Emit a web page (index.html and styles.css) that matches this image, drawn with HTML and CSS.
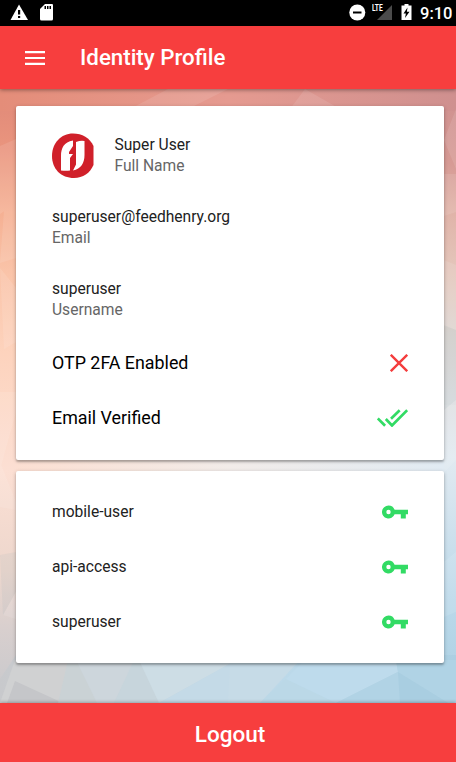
FILE: index.html
```html
<!DOCTYPE html>
<html lang="en">
<head>
<meta charset="utf-8">
<title>Identity Profile</title>
<link rel="stylesheet" href="styles.css">
</head>
<body>
<div class="status-bar">
  <svg class="status-left" width="60" height="26" viewBox="0 0 60 26">
    <path fill="#fff" d="M19 4.500 28 20H10.500z"/>
    <path fill="#000" d="M18 10h2.200v4.500H18zM18 16h2.200v2H18z"/>
    <path fill="#fff" d="M45 4h7q1 0 1 1v14q0 1.500-1.500 1.500h-10Q40 20.500 40 19V9z"/>
    <path fill="#000" d="M44.500 6H46v3h-1.500zM47 6h1.500v3H47zM49.500 6H51v3h-1.500z"/>
  </svg>
  <div class="status-right">
    <svg width="66" height="26" viewBox="348 0 66 26">
      <circle cx="357.300" cy="12.500" r="8" fill="#fff"/>
      <path fill="#000" d="M353 11.500h8.500v2H353z"/>
      <path fill="#4b4b4b" d="M392 5v15h-15z"/>
      <path fill="#fff" d="M404.500 4h4v1.500h3V20h-10V5.500h3z"/>
      <path fill="#000" d="M407.500 7.500 403.500 13.500h2.400L405 18l4.500-6.200h-2.600z"/>
    </svg>
    <span class="lte">LTE</span>
    <span class="clock">9:10</span>
  </div>
</div>
<header class="toolbar">
  <svg class="menu" width="20" height="14" viewBox="0 0 20 14"><path fill="#fff" d="M0 0h20v2.200H0zM0 5.900h20v2.200H0zM0 11.800h20V14H0z"/></svg>
  <h1>Identity Profile</h1>
</header>
<main class="content">
  <svg class="backdrop" viewBox="0 89 456 614" preserveAspectRatio="none">
    <defs>
      <linearGradient id="l" x1="0" y1="0" x2="0" y2="1">
        <stop offset="0" stop-color="#df8878"/><stop offset=".1" stop-color="#ea957e"/><stop offset=".2" stop-color="#f5b093"/><stop offset=".3" stop-color="#fac4a9"/><stop offset=".43" stop-color="#fdd3bd"/><stop offset=".62" stop-color="#fcdfd3"/><stop offset=".78" stop-color="#edd7cd"/><stop offset=".88" stop-color="#d8cfce"/><stop offset="1" stop-color="#c6c8cc"/>
      </linearGradient>
      <linearGradient id="r" x1="0" y1="0" x2="0" y2="1">
        <stop offset="0" stop-color="#cf908f"/><stop offset=".12" stop-color="#d69a94"/><stop offset=".2" stop-color="#e0b3a8"/><stop offset=".3" stop-color="#e4c7bc"/><stop offset=".4" stop-color="#ddd6d2"/><stop offset=".6" stop-color="#e1eaf1"/><stop offset=".72" stop-color="#cee1ed"/><stop offset=".85" stop-color="#b9d8e9"/><stop offset="1" stop-color="#abcfe2"/>
      </linearGradient>
      <linearGradient id="t"><stop offset="0" stop-color="#e48d79"/><stop offset=".5" stop-color="#e59a90"/><stop offset="1" stop-color="#cf908f"/></linearGradient>
      <linearGradient id="m"><stop offset="0" stop-color="#fcdfd2"/><stop offset=".5" stop-color="#f2ece9"/><stop offset="1" stop-color="#e1ebf3"/></linearGradient>
      <linearGradient id="b"><stop offset="0" stop-color="#c8c9cc"/><stop offset=".3" stop-color="#c7d5dc"/><stop offset=".65" stop-color="#bbd9ea"/><stop offset="1" stop-color="#abcfe2"/></linearGradient>
    </defs>
    <path fill="url(#l)" d="M0 89h228v614H0z"/>
    <path fill="url(#r)" d="M228 89h228v614H228z"/>
    <path fill="url(#t)" d="M0 89h456v22H0z"/>
    <path fill="url(#m)" d="M16 450h428v30H16z"/>
    <path fill="url(#b)" d="M16 655h440v48H0v-24z"/>
    <path fill="#d0d1d2" d="M15 660h60l-13 43H0z"/>
    <path fill="#c5c6c9" d="m15 681 48 22H7z"/>
    <path fill="#cad2d5" d="M68 660h8l22 43H58z"/>
    <path fill="#cdd6dc" d="M76 660h60l-22 43H97z"/>
    <path fill="#c7d5dc" d="M134 660h6l20 43h-46z"/>
    <path fill="#cddde5" d="M139 660h98l-78 43z"/>
    <path fill="#c4dae7" d="m159 703 72-40v40z"/>
    <path fill="#c6dbe7" d="M230 660h70l-40 43h-32z"/>
    <path fill="#bbd8e7" d="m286 679 50 24h-76z"/>
    <path fill="#bedbec" d="m304 660-18 19 50 24 62-31-2-12z"/>
    <path fill="#b1d3e5" d="m336 703 62-31 2 31z"/>
    <path fill="#b0d3e5" d="M396 660h60v43h-8l-50-31z"/>
    <path fill="#a9cee1" d="m398 672 50 31h-48z"/>
    <g fill="#fff" fill-opacity=".1">
      <path d="m0 146 16-7v64L0 214zM4 211l12-8v55l-16 5zM0 268l16 20v54L4 349zM0 392h16v20L0 470zM0 462l16 40v8l-16-3zM3 615l13-24v28z"/>
      <path d="m444 140 12 29v-60zM444 174h12v38l-12 4zM444 260l12 5v65l-12-4zM444 405h12v55l-12 12zM444 562l12-10v60l-12 5z"/>
      <path d="m130 109 38-20h60l-40 20zM290 109l15-20 35 20z"/>
    </g>
    <g fill="#8ba5b5" fill-opacity=".1">
      <path d="M0 555l16-3v40l-13 23zM444 325l12 5v70l-12 10z"/>
    </g>
  </svg>
  <section class="card profile">
    <div class="person">
      <svg width="42" height="46" viewBox="0 0 42 46">
        <path fill="#d0202a" d="M21 .5C30 .5 38 5 41.500 13v19C38 40 31 45 22 45 9 45 0 36 0 23S9 .5 21 .5z"/>
        <path fill="#fff" d="M21 7.500C12 9 9 15 9 23v14.500q5 .500 9 0V25l3-4h-4v-2l4-6z"/>
        <path fill="#fff" d="M24 9q5-2 8.500-1v14c0 8-3.500 14-11.500 15.500l3-6z"/>
      </svg>
      <div><div class="value">Super User</div><div class="label">Full Name</div></div>
    </div>
    <div class="field"><div class="value">superuser@feedhenry.org</div><div class="label">Email</div></div>
    <div class="field last"><div class="value">superuser</div><div class="label">Username</div></div>
    <div class="check"><span>OTP 2FA Enabled</span>
      <svg width="18" height="18" viewBox="0 0 18 18"><path fill="none" stroke="#f43d3d" stroke-width="2.400" d="m.8.8 16.400 16.400M17.200.8.800 17.200"/></svg>
    </div>
    <div class="check"><span>Email Verified</span>
      <svg width="31" height="18" viewBox="0 0 31 18"><path fill="none" stroke="#32db64" stroke-width="2.700" d="m.8 9.500 7.300 7.300M8.800 10l6.200 6.500L30.200 1.200M14 9.800l8.700-8.600"/></svg>
    </div>
  </section>
  <section class="card roles">
    <div class="role"><span>mobile-user</span><svg class="key" viewBox="0 0 26 14"><path fill="#32db64" fill-rule="evenodd" d="M6.500.5a6.500 6.500 0 0 1 6.100 4.300H26v4.400h-2.200v4.300h-5V9.200h-6.200A6.500 6.500 0 1 1 6.500.500zm0 4.300a2.200 2.200 0 1 0 0 4.400 2.200 2.200 0 0 0 0-4.400z"/></svg></div>
    <div class="role"><span>api-access</span><svg class="key" viewBox="0 0 26 14"><path fill="#32db64" fill-rule="evenodd" d="M6.500.5a6.500 6.500 0 0 1 6.100 4.300H26v4.400h-2.200v4.300h-5V9.200h-6.200A6.500 6.500 0 1 1 6.500.500zm0 4.300a2.200 2.200 0 1 0 0 4.400 2.200 2.200 0 0 0 0-4.400z"/></svg></div>
    <div class="role"><span>superuser</span><svg class="key" viewBox="0 0 26 14"><path fill="#32db64" fill-rule="evenodd" d="M6.500.5a6.500 6.500 0 0 1 6.100 4.300H26v4.400h-2.200v4.300h-5V9.200h-6.200A6.500 6.500 0 1 1 6.500.500zm0 4.300a2.200 2.200 0 1 0 0 4.400 2.200 2.200 0 0 0 0-4.400z"/></svg></div>
  </section>
</main>
<footer class="logout">Logout</footer>
</body>
</html>
```
FILE: styles.css
```css
* { box-sizing: border-box; }
body {
  margin: 0;
  height: 762px;
  display: flex;
  flex-direction: column;
  overflow: hidden;
  font-family: Roboto, sans-serif;
  color: #222;
}
svg { display: block; flex: none; }
.status-bar {
  height: 26px;
  flex: none;
  display: flex;
  justify-content: space-between;
  background: #000;
  color: #fff;
}
.status-right { display: flex; position: relative; padding-right: 5px; gap: 6px; }
.lte {
  position: absolute;
  left: 24px;
  top: 3px;
  font-size: 9.5px;
  line-height: 10px;
  font-weight: 700;
  transform: scaleX(.7);
  transform-origin: left;
}
.clock { font-size: 16.500px; line-height: 27px; font-weight: 500; width: 31px; white-space: nowrap; }
.toolbar {
  height: 63px;
  flex: none;
  display: flex;
  align-items: center;
  gap: 35px;
  padding-left: 25px;
  background: #f73e3e;
  color: #fff;
  position: relative;
  z-index: 1;
  box-shadow: 0 1px 4px rgba(0, 0, 0, .4);
}
h1 { margin: 0; padding-bottom: 2px; font-size: 22.300px; font-weight: 500; line-height: 26px; }
.content {
  height: 614px;
  flex: none;
  position: relative;
  padding: 17px 12px 0 16px;
}
.backdrop { position: absolute; inset: 0; width: 100%; height: 100%; }
.card {
  position: relative;
  background: #fff;
  border-radius: 2px;
  padding: 0 36px;
  box-shadow: 0 2px 2px rgba(0, 0, 0, .22), 0 1px 4px rgba(0, 0, 0, .2);
}
.profile { height: 354px; padding-top: 27px; }
.roles { height: 192px; margin-top: 11px; padding-top: 13px; }
.person { display: flex; gap: 20.500px; height: 67px; }
.field { height: 72px; padding-top: 7px; }
.field.last { height: 63px; }
.value { font-size: 15.600px; line-height: 21px; height: 21px; }
.person .value { margin-top: 2px; }
.label { font-size: 15.600px; line-height: 20px; color: #666; }
.check {
  height: 55px;
  display: flex;
  align-items: center;
  justify-content: space-between;
  font-size: 17.850px;
  color: #000;
}
.role {
  height: 55px;
  display: flex;
  align-items: center;
  justify-content: space-between;
  font-size: 15.600px;
}
.key { width: 26px; height: 14px; }
.logout {
  height: 59px;
  flex: none;
  background: #f73e3e;
  color: #fff;
  font-size: 22.500px;
  font-weight: 500;
  line-height: 63px;
  text-align: center;
  padding-left: 4px;
  position: relative;
  box-shadow: 0 -1px 3px rgba(0, 0, 0, .25);
}
```
